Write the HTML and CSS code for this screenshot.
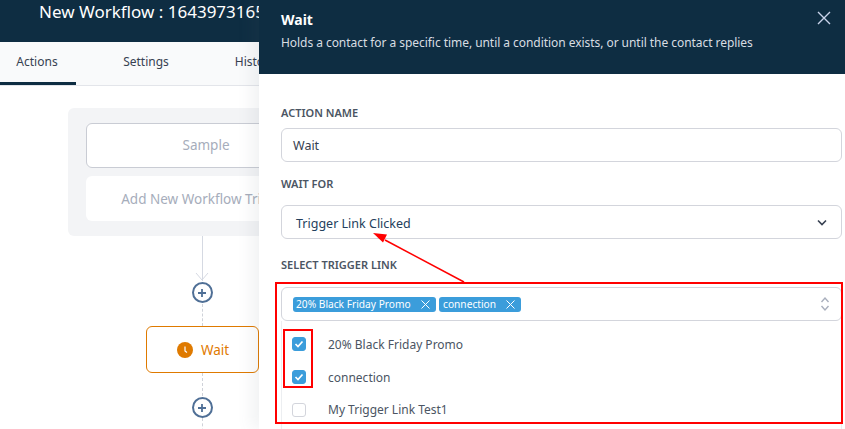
FILE: index.html
```html
<!DOCTYPE html>
<html lang="en">
<head>
    <meta charset="UTF-8">
    <title>New Workflow - Wait</title>
    <link rel="stylesheet" href="styles.css">
</head>
<body>
    <div class="page">
        <header class="topbar">
            <h1>New Workflow : 1643973165</h1>
        </header>

        <nav class="tabs">
            <a class="tab active">Actions</a>
            <a class="tab">Settings</a>
            <a class="tab">History</a>
        </nav>

        <main class="canvas">
            <div class="trigger-card">
                <div class="trigger-item">Sample</div>
                <div class="trigger-add">Add New Workflow Trigger</div>
            </div>

            <div class="line solid"></div>
            <svg class="line-arrow" width="14" height="8" viewBox="0 0 14 8">
                <path d="M1 0l6 7 6-7" fill="none" stroke="#d5d9e2" stroke-width="1"/>
            </svg>
            <div class="plus">
                <svg width="10" height="10" viewBox="0 0 10 10">
                    <path d="M5 1v8M1 5h8" stroke="#4f6f96" stroke-width="1.8"/>
                </svg>
            </div>
            <div class="line dashed first"></div>

            <div class="node">
                <svg width="16" height="16" viewBox="0 0 16 16">
                    <circle cx="8" cy="8" r="8" fill="#df7a00"/>
                    <path d="M8 4.5V9l2 1.5" fill="none" stroke="#fff" stroke-width="1.2"/>
                </svg>
                <span>Wait</span>
            </div>

            <div class="line dashed second"></div>
            <div class="plus">
                <svg width="10" height="10" viewBox="0 0 10 10">
                    <path d="M5 1v8M1 5h8" stroke="#4f6f96" stroke-width="1.8"/>
                </svg>
            </div>
            <div class="line dashed"></div>
        </main>
    </div>

    <aside class="panel">
        <div class="panel-head">
            <div>
                <h2>Wait</h2>
                <p>Holds a contact for a specific time, until a condition exists, or until the contact replies</p>
            </div>
            <svg class="close" width="14" height="14" viewBox="0 0 14 14">
                <path d="M1 1l12 12M13 1L1 13" stroke="#c9d3ea" stroke-width="1.4"/>
            </svg>
        </div>

        <form class="panel-body">
            <label class="field-label">ACTION NAME</label>
            <div class="input">Wait</div>

            <label class="field-label wide">WAIT FOR</label>
            <div class="input select">
                <span>Trigger Link Clicked</span>
                <svg width="12" height="8" viewBox="0 0 12 8">
                    <path d="M2 1.5l4 4 4-4" fill="none" stroke="#374151" stroke-width="1.6"/>
                </svg>
            </div>

            <label class="field-label wider">SELECT TRIGGER LINK</label>
            <div class="input multi">
                <span class="tag first-tag">20% Black Friday Promo
                    <svg width="9" height="9" viewBox="0 0 9 9"><path d="M.5.5l8 8M8.5.5l-8 8" stroke="#fff" stroke-width="1"/></svg>
                </span>
                <span class="tag second-tag">connection
                    <svg width="9" height="9" viewBox="0 0 9 9"><path d="M.5.5l8 8M8.5.5l-8 8" stroke="#fff" stroke-width="1"/></svg>
                </span>
                <svg class="updown" width="10" height="16" viewBox="0 0 10 16">
                    <path d="M1.500 6L5 2l3.500 4M1.500 10L5 14l3.500-4" fill="none" stroke="#a9afbd" stroke-width="1.4"/>
                </svg>
            </div>

            <ul class="options">
                <li>
                    <span class="check on">
                        <svg width="10" height="8" viewBox="0 0 10 8"><path d="M1.500 4l2.500 2.500 4.500-5" fill="none" stroke="#fff" stroke-width="1.700"/></svg>
                    </span>
                    20% Black Friday Promo
                </li>
                <li>
                    <span class="check on">
                        <svg width="10" height="8" viewBox="0 0 10 8"><path d="M1.500 4l2.500 2.500 4.500-5" fill="none" stroke="#fff" stroke-width="1.700"/></svg>
                    </span>
                    connection
                </li>
                <li>
                    <span class="check"></span>
                    My Trigger Link Test1
                </li>
            </ul>
        </form>

        <!-- red markup drawn on top of the screenshot -->
        <div class="mark mark-list"></div>
        <div class="mark mark-checks"></div>
        <svg class="mark-arrow" width="110" height="60" viewBox="0 0 110 60">
            <path d="M97 54L18 12" stroke="#f00" stroke-width="1.500"/>
            <path d="M6 5l14 1.500-4 8z" fill="#f00"/>
        </svg>
    </aside>
</body>
</html>
```

FILE: styles.css
```css
* {
    margin: 0;
    padding: 0;
    box-sizing: border-box;
}

html, body {
    height: 100%;
    overflow: hidden;
}

body {
    font-family: "Noto Sans", "Open Sans", sans-serif;
    background: #fff;
    color: #374151;
    position: relative;
}

.topbar {
    height: 42px;
    background: #0e2d42;
    padding: 1px 0 0 39px;
}

.topbar h1 {
    font-size: 17px;
    line-height: 22px;
    font-weight: 400;
    color: #fff;
    white-space: nowrap;
}

.tabs {
    display: flex;
    height: 44px;
    background: #f9fafb;
    border-bottom: 1px solid #e3e5ea;
}

.tab {
    width: 76px;
    height: 43px;
    margin-right: 33px;
    padding: 10px 2px 0 0;
    font-size: 12px;
    line-height: 20px;
    text-align: center;
    color: #374151;
}

.tab.active {
    border-bottom: 3px solid #0e2d42;
}

.canvas {
    display: flex;
    flex-direction: column;
    align-items: center;
    width: 268px;
    margin-left: 68px;
    padding-top: 22px;
}

.trigger-card {
    width: 268px;
    height: 128px;
    padding: 15px 18px;
    background: #f3f4f6;
    border-radius: 6px;
}

.trigger-item {
    height: 45px;
    margin-bottom: 8px;
    background: #fff;
    border: 1px solid #c9ccd4;
    border-radius: 6px;
    font-size: 13.5px;
    line-height: 43px;
    padding-left: 8px;
    text-align: center;
    color: #a6adbb;
}

.trigger-add {
    height: 45px;
    background: #fff;
    border-radius: 6px;
    font-size: 13.5px;
    line-height: 46px;
    padding-left: 8px;
    text-align: center;
    white-space: nowrap;
    color: #a6adbb;
}

.line {
    width: 0;
    height: 19px;
}

.line.solid {
    height: 45px;
    border-left: 1px solid #d5d9e2;
}

.line.dashed {
    border-left: 1px dashed #cfd2d9;
}

.line.first {
    height: 22px;
    margin-top: 1px;
}

.line.second {
    height: 23px;
}

.line-arrow {
    margin-top: -8px;
    display: block;
}

.plus {
    width: 21px;
    height: 21px;
    margin-top: 1px;
    border: 2px solid #4f6f96;
    border-radius: 50%;
    display: flex;
    align-items: center;
    justify-content: center;
    background: #fff;
}

.node {
    width: 113px;
    height: 47px;
    display: flex;
    align-items: center;
    justify-content: center;
    gap: 8px;
    padding-left: 2px;
    border: 1px solid #df7a00;
    border-radius: 6px;
    background: #fff;
    color: #df7a00;
    font-size: 13.5px;
    flex-shrink: 0;
}

.panel {
    position: absolute;
    top: 0;
    bottom: 0;
    left: 259px;
    right: 0;
    background: #fff;
    box-shadow: -8px 0 14px rgba(90, 100, 120, 0.08);
    overflow: hidden;
}

.panel-head {
    height: 74px;
    background: #0e2d42;
    padding: 10px 14px 0 22px;
    display: flex;
    justify-content: space-between;
    align-items: flex-start;
}

.panel-head h2 {
    font-size: 14px;
    line-height: 20px;
    font-weight: 700;
    color: #fff;
}

.panel-head p {
    margin-top: 4px;
    font-size: 12px;
    line-height: 18px;
    letter-spacing: -0.05px;
    color: #d8dde2;
}

.close {
    margin-top: 1px;
}

.panel-body {
    padding: 30px 3px 0 22px;
}

.field-label {
    display: block;
    height: 24px;
    font-size: 11px;
    line-height: 18px;
    font-weight: 600;
    color: #4b5563;
}

.field-label.wide {
    height: 30px;
}

.field-label.wider {
    height: 31px;
}

.input {
    height: 34px;
    margin-bottom: 13px;
    padding-left: 11px;
    border: 1px solid #d3d5dc;
    border-radius: 6px;
    font-size: 12.5px;
    line-height: 33px;
    color: #374151;
}

.select {
    display: flex;
    justify-content: space-between;
    align-items: center;
    margin-bottom: 17px;
    padding: 2px 13px 0 14px;
    color: #24405c;
}

.multi {
    display: flex;
    align-items: center;
    gap: 3px;
    margin-bottom: 0;
    padding-left: 11px;
    position: relative;
}

.tag {
    display: flex;
    align-items: center;
    justify-content: space-between;
    gap: 7px;
    height: 15px;
    padding: 0 6px 0 3px;
    background: #3b9ddb;
    border-radius: 3px;
    font-size: 10.2px;
    line-height: 15px;
    color: #fff;
    white-space: nowrap;
}

.first-tag {
    width: 143px;
}

.second-tag {
    width: 82px;
    padding-left: 4px;
}

.updown {
    position: absolute;
    right: 11px;
    top: 8px;
}

.options {
    list-style: none;
    height: 120px;
    padding-top: 7px;
    border: 1px solid #eceef1;
    border-top: 0;
    border-radius: 0 0 6px 6px;
}

.options li {
    display: flex;
    align-items: center;
    height: 32.800px;
    padding-left: 10px;
    font-size: 12px;
    color: #4b5563;
}

.check {
    display: flex;
    align-items: center;
    justify-content: center;
    width: 14px;
    height: 14px;
    margin-right: 22px;
    border: 1px solid #d3d5dc;
    border-radius: 3px;
}

.check.on {
    background: #3b9ddb;
    border-color: #3b9ddb;
}

.mark {
    position: absolute;
    border: 2px solid #f00;
}

.mark-list {
    left: 16px;
    top: 282px;
    width: 568px;
    height: 142px;
}

.mark-checks {
    left: 24px;
    top: 329px;
    width: 30px;
    height: 59px;
}

.mark-arrow {
    position: absolute;
    left: 108px;
    top: 228px;
}
```
